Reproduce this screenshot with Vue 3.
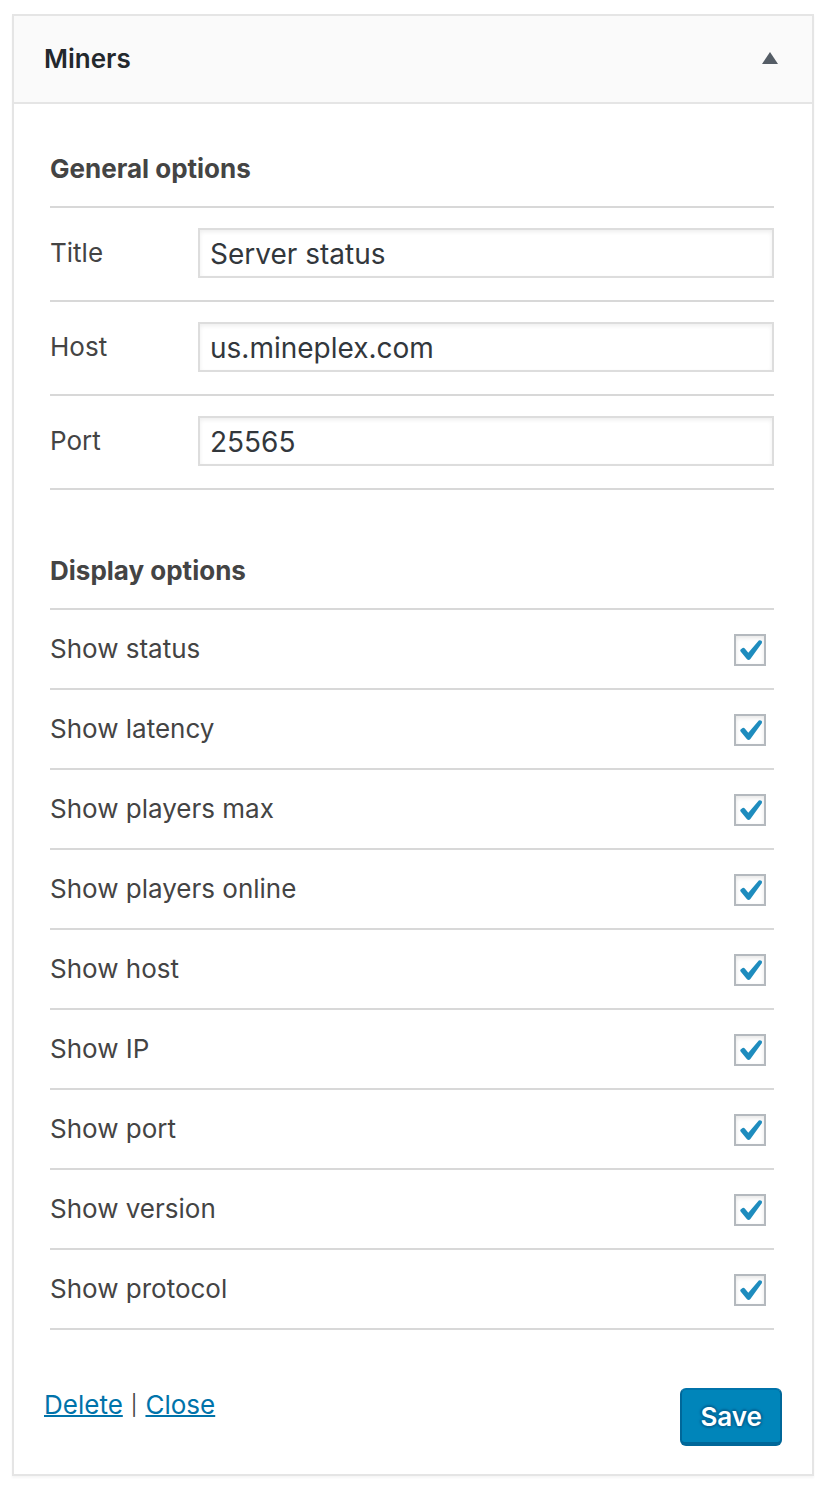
<script setup>
import { reactive } from 'vue'

const fields = reactive([
  { id: 'title', label: 'Title', value: 'Server status' },
  { id: 'host', label: 'Host', value: 'us.mineplex.com' },
  { id: 'port', label: 'Port', value: '25565' },
])

const toggles = reactive([
  { id: 'status', label: 'Show status', on: true },
  { id: 'latency', label: 'Show latency', on: true },
  { id: 'players-max', label: 'Show players max', on: true },
  { id: 'players-online', label: 'Show players online', on: true },
  { id: 'show-host', label: 'Show host', on: true },
  { id: 'show-ip', label: 'Show IP', on: true },
  { id: 'show-port', label: 'Show port', on: true },
  { id: 'show-version', label: 'Show version', on: true },
  { id: 'show-protocol', label: 'Show protocol', on: true },
])
</script>

<template>
  <form class="widget" @submit.prevent>
    <header class="widget-top">
      <h3 class="widget-title">Miners</h3>
      <button type="button" class="collapse" aria-label="Collapse Miners">
        <svg width="16" height="12" viewBox="0 0 16 12" aria-hidden="true">
          <path d="M8 0 L16 12 H0 Z" fill="#555d66" />
        </svg>
      </button>
    </header>

    <div class="widget-body">
      <section class="group">
        <h4 class="group-title">General options</h4>
        <div v-for="f in fields" :key="f.id" class="row field-row">
          <label :for="f.id">{{ f.label }}</label>
          <input :id="f.id" v-model="f.value" class="text" type="text" />
        </div>
      </section>

      <section class="group">
        <h4 class="group-title">Display options</h4>
        <div v-for="t in toggles" :key="t.id" class="row toggle-row">
          <label :for="t.id">{{ t.label }}</label>
          <span class="check">
            <input :id="t.id" v-model="t.on" type="checkbox" />
            <svg v-if="t.on" width="32" height="32" viewBox="0 0 32 32" aria-hidden="true">
              <path
                d="M6.6 15.4 L8.6 14 Q9.8 13.4 10.8 14.6 L14.3 18.8 L24.8 6.6 Q26 5.6 27.4 6.8 Q28.6 7.8 27.8 9.2 L16.4 25 Q14.6 27 12.8 25 L6.6 17.6 Q5.8 16.4 6.6 15.4 Z"
                fill="#1e8cbe"
              />
            </svg>
          </span>
        </div>
      </section>

      <footer class="actions">
        <div class="links">
          <a href="#delete">Delete</a>
          <span class="separator">|</span>
          <a href="#close">Close</a>
        </div>
        <button type="submit" class="save">Save</button>
      </footer>
    </div>
  </form>
</template>

<style>
body {
  background: #fff;
}
</style>

<style scoped>
.widget {
  margin: 14px 12px 12px;
  border: 2px solid #e5e5e5;
  box-shadow: 0 2px 2px rgba(0, 0, 0, 0.04);
  background: #fff;
  color: #444;
  font-family: Inter, 'Liberation Sans', sans-serif;
  font-size: 26px;
  line-height: 32px;
}

.widget-top {
  display: flex;
  align-items: center;
  justify-content: space-between;
  padding: 27px 34px 27px 30px;
  border-bottom: 2px solid #e5e5e5;
  background: #fafafa;
}

.widget-title,
.group-title {
  margin: 0;
  font-size: 26px;
  font-weight: 600;
}

.widget-title {
  color: #23282d;
}

.collapse {
  display: flex;
  padding: 0 0 2px;
  border: 0;
  background: none;
}

.widget-body {
  padding: 0 30px 28px;
}

.group {
  padding: 0 8px 0 6px;
}

.group-title {
  padding: 49px 0 21px;
  border-bottom: 2px solid #d8d8d8;
  font-weight: 700;
}

.group + .group .group-title {
  padding-top: 65px;
}

.row {
  display: grid;
  align-items: center;
  border-bottom: 2px solid #d8d8d8;
}

.field-row {
  grid-template-columns: 148px 1fr;
  padding: 20px 0 22px;
}

.text {
  box-sizing: border-box;
  width: 100%;
  height: 50px;
  margin: 0;
  padding: 4px 10px 2px;
  border: 2px solid #ddd;
  border-radius: 0;
  background: #fff;
  box-shadow: inset 0 2px 4px rgba(0, 0, 0, 0.07);
  color: #32373c;
  font-family: inherit;
  font-size: 28px;
  outline: 0;
}

.toggle-row {
  grid-template-columns: 1fr auto;
  align-items: start;
  padding: 24px 8px 22px 0;
  line-height: 30px;
}

.check {
  display: grid;
}

.check > * {
  grid-area: 1 / 1;
}

.check input {
  box-sizing: border-box;
  appearance: none;
  width: 32px;
  height: 32px;
  margin: 0;
  border: 2px solid #b4b9be;
  background: #fff;
  box-shadow: inset 0 2px 4px rgba(0, 0, 0, 0.1);
}

.check svg {
  pointer-events: none;
}

.actions {
  display: flex;
  align-items: flex-start;
  justify-content: space-between;
  padding-top: 58px;
}

.links {
  display: flex;
  align-items: center;
  gap: 8px;
  line-height: 34px;
}

.links a {
  color: #0073aa;
  text-decoration: underline;
  text-decoration-thickness: 2px;
}

.separator {
  font-size: 20px;
}

.save {
  padding: 11px 18px 9px;
  border: 2px solid #006799;
  border-top-color: #0073aa;
  border-bottom-width: 4px;
  border-radius: 6px;
  background: #0085ba;
  color: #fff;
  font: inherit;
  font-weight: 600;
  text-shadow: 0 -2px 2px #006799, 2px 0 2px #006799, 0 2px 2px #006799, -2px 0 2px #006799;
}
</style>
